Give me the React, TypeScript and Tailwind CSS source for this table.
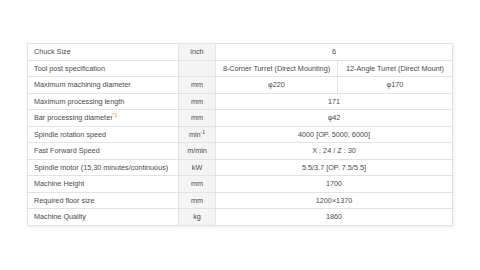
import React from 'react';

type Row = {
  label: React.ReactNode;
  unit: React.ReactNode;
  values: React.ReactNode[];
};

const rows: Row[] = [
  { label: 'Chuck Size', unit: 'inch', values: ['6'] },
  { label: 'Tool post specification', unit: '', values: ['8-Corner Turret (Direct Mounting)', '12-Angle Turret (Direct Mount)'] },
  { label: 'Maximum machining diameter', unit: 'mm', values: ['φ220', 'φ170'] },
  { label: 'Maximum processing length', unit: 'mm', values: ['171'] },
  {
    label: (
      <>
        Bar processing diameter
        <span className="relative -top-[3px] text-[5px] text-[#e8821e]">*1</span>
      </>
    ),
    unit: 'mm',
    values: ['φ42'],
  },
  {
    label: 'Spindle rotation speed',
    unit: (
      <>
        min<span className="relative -top-[3px] text-[5px]">-1</span>
      </>
    ),
    values: ['4000 [OP. 5000, 6000]'],
  },
  { label: 'Fast Forward Speed', unit: 'm/min', values: ['X : 24 / Z : 30'] },
  { label: 'Spindle motor (15,30 minutes/continuous)', unit: 'kW', values: ['5.5/3.7 [OP. 7.5/5.5]'] },
  { label: 'Machine Height', unit: 'mm', values: ['1700'] },
  { label: 'Required floor size', unit: 'mm', values: ['1200×1370'] },
  { label: 'Machine Quality', unit: 'kg', values: ['1860'] },
];

const cell = 'border border-[#e3e3e3] text-[#4a4a4a] font-normal leading-none';

export default function App() {
  return (
    <div className="w-[480px] h-[270px] bg-white pt-[43px] pl-[27px]" style={{ fontFamily: '"Liberation Sans", Arial, sans-serif' }}>
      <table className="border-collapse table-fixed w-[425px] text-[7.25px] shadow-[1px_1px_3px_rgba(0,0,0,0.08)]">
        <colgroup>
          <col className="w-[151px]" />
          <col className="w-[37px]" />
          <col className="w-[122px]" />
          <col className="w-[115px]" />
        </colgroup>
        <tbody>
          {rows.map((row, i) => (
            <tr key={i} className="h-[16.5px]">
              <td className={`${cell} pl-[6px] text-left`}>{row.label}</td>
              <td className={`${cell} bg-[#f4f4f4] text-center`}>{row.unit}</td>
              {row.values.length === 1 ? (
                <td colSpan={2} className={`${cell} text-center`}>
                  {row.values[0]}
                </td>
              ) : (
                row.values.map((v, j) => (
                  <td key={j} className={`${cell} text-center`}>
                    {v}
                  </td>
                ))
              )}
            </tr>
          ))}
        </tbody>
      </table>
    </div>
  );
}
